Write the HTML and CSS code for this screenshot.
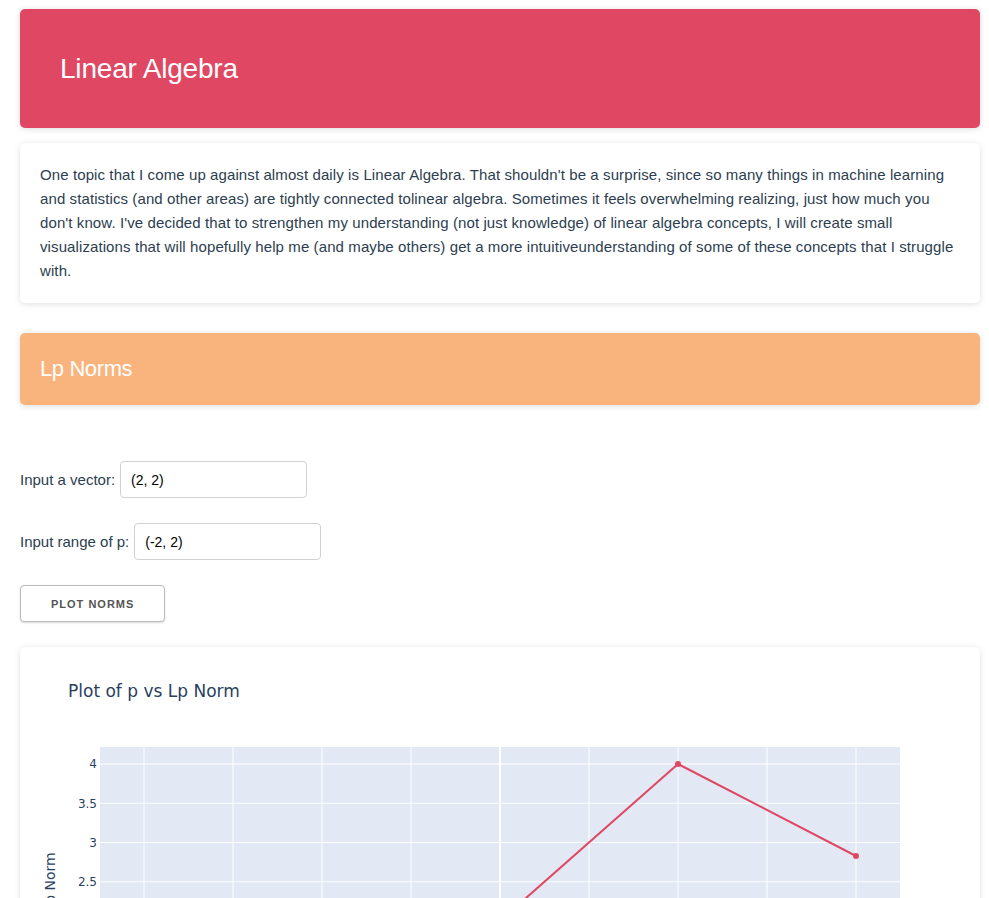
FILE: index.html
```html
<!DOCTYPE html>
<html lang="en">
<head>
<meta charset="utf-8">
<title>Linear Algebra</title>
<link rel="stylesheet" href="styles.css">
</head>
<body>
<main class="page">
  <header class="banner">
    <h1 class="banner-title">Linear Algebra</h1>
  </header>

  <section class="card intro">
    <p>One topic that I come up against almost daily is Linear Algebra. That shouldn't be a surprise, since so many things in machine learning and statistics (and other areas) are tightly connected tolinear algebra. Sometimes it feels overwhelming realizing, just how much you don't know. I've decided that to strengthen my understanding (not just knowledge) of linear algebra concepts, I will create small visualizations that will hopefully help me (and maybe others) get a more intuitiveunderstanding of some of these concepts that I struggle with.</p>
  </section>

  <section class="section-head">
    <h2 class="section-title">Lp Norms</h2>
  </section>

  <form class="controls">
    <div class="field"><label for="vec">Input a vector:</label> <input id="vec" class="text-input" type="text" value="(2, 2)"></div>
    <div class="field"><label for="rng">Input range of p:</label> <input id="rng" class="text-input" type="text" value="(-2, 2)"></div>
    <div class="field"><button type="button" class="btn">Plot Norms</button></div>
  </form>

  <section class="card plot-card">
    <svg class="plot" width="960" height="450" viewBox="0 0 960 450" xmlns="http://www.w3.org/2000/svg">
      <text class="plot-title" x="48" y="50">Plot of p vs Lp Norm</text>
      <rect x="80" y="100" width="800" height="270" fill="#e2e9f4"/>
      <g stroke="#ffffff" stroke-width="1">
        <line x1="124" y1="100" x2="124" y2="370"/>
        <line x1="213" y1="100" x2="213" y2="370"/>
        <line x1="302" y1="100" x2="302" y2="370"/>
        <line x1="391" y1="100" x2="391" y2="370"/>
        <line x1="569" y1="100" x2="569" y2="370"/>
        <line x1="658" y1="100" x2="658" y2="370"/>
        <line x1="747" y1="100" x2="747" y2="370"/>
        <line x1="836" y1="100" x2="836" y2="370"/>
        <line x1="80" y1="117" x2="880" y2="117"/>
        <line x1="80" y1="156.3" x2="880" y2="156.3"/>
        <line x1="80" y1="195.5" x2="880" y2="195.5"/>
        <line x1="80" y1="234.8" x2="880" y2="234.8"/>
        <line x1="80" y1="274" x2="880" y2="274"/>
        <line x1="80" y1="313.3" x2="880" y2="313.3"/>
        <line x1="80" y1="352.5" x2="880" y2="352.5"/>
      </g>
      <line x1="480" y1="100" x2="480" y2="370" stroke="#ffffff" stroke-width="2"/>
      <g class="tick" text-anchor="end">
        <text x="77" y="121">4</text>
        <text x="77" y="160.5">3.5</text>
        <text x="77" y="199.5">3</text>
        <text x="77" y="239">2.5</text>
        <text x="77" y="278">2</text>
        <text x="77" y="317.5">1.5</text>
        <text x="77" y="356.5">1</text>
      </g>
      <g class="tick" text-anchor="middle">
        <text x="124" y="388">−2</text>
        <text x="213" y="388">−1.5</text>
        <text x="302" y="388">−1</text>
        <text x="391" y="388">−0.5</text>
        <text x="480" y="388">0</text>
        <text x="569" y="388">0.5</text>
        <text x="658" y="388">1</text>
        <text x="747" y="388">1.5</text>
        <text x="836" y="388">2</text>
      </g>
      <text class="axis-title" x="480" y="418" text-anchor="middle">p</text>
      <text class="axis-title" x="35" y="235" text-anchor="middle" transform="rotate(-90 35 235)">Lp Norm</text>
      <polyline points="124,320 302,352.5 480,274 658,117 836,209" fill="none" stroke="#df4763" stroke-width="2" stroke-linejoin="round"/>
      <g fill="#df4763">
        <circle cx="124" cy="320" r="3"/>
        <circle cx="302" cy="352.5" r="3"/>
        <circle cx="480" cy="274" r="3"/>
        <circle cx="658" cy="117" r="3"/>
        <circle cx="836" cy="209" r="3"/>
      </g>
    </svg>
  </section>
</main>
</body>
</html>
```

FILE: styles.css
```css
* { box-sizing: border-box; }

html, body {
  margin: 0;
  padding: 0;
  background: #ffffff;
}

body {
  font-family: "Liberation Sans", Arial, Helvetica, sans-serif;
  font-size: 15px;
  line-height: 24px;
  color: #2c3e50;
}

.page {
  width: 960px;
  margin-left: 20px;
  padding-top: 9px;
  padding-bottom: 40px;
}

.banner {
  height: 119px;
  padding: 0 40px;
  display: flex;
  align-items: center;
  background: #df4763;
  border-radius: 5px;
  box-shadow: 0 1px 6px rgba(0, 0, 0, 0.14);
}

.banner-title {
  margin: 0;
  font-size: 28px;
  line-height: 38px;
  font-weight: normal;
  letter-spacing: -0.2px;
  color: #ffffff;
}

.card {
  background: #ffffff;
  border-radius: 5px;
  box-shadow: 0 1px 6px rgba(0, 0, 0, 0.13);
}

.intro {
  margin-top: 15px;
  padding: 20px;
}

.intro p {
  margin: 0;
  letter-spacing: 0.1px;
}

.section-head {
  margin-top: 30px;
  height: 72px;
  padding: 0 20px;
  display: flex;
  align-items: center;
  background: #f9b37c;
  border-radius: 5px;
  box-shadow: 0 1px 6px rgba(0, 0, 0, 0.14);
}

.section-title {
  margin: 0;
  font-size: 22px;
  line-height: 30px;
  font-weight: normal;
  letter-spacing: -0.4px;
  color: #ffffff;
}

.controls {
  margin: 0;
  padding-top: 56px;
  display: flex;
  flex-direction: column;
  gap: 25px;
}

.field {
  display: flex;
  align-items: center;
  height: 37px;
}

.field label {
  margin-right: 5px;
}

.text-input {
  width: 187px;
  height: 37px;
  padding: 0 10px;
  border: 1px solid #d1d1d1;
  border-radius: 4px;
  background: #ffffff;
  font-family: "Liberation Sans", Arial, sans-serif;
  font-size: 14px;
  color: #000000;
  outline: none;
}

.btn {
  height: 37px;
  padding: 0 30px;
  border: 1px solid #bbbbbb;
  border-radius: 4px;
  background: #ffffff;
  box-shadow: 0 1px 2px rgba(0, 0, 0, 0.15);
  font-family: "Liberation Sans", Arial, sans-serif;
  font-size: 11px;
  font-weight: bold;
  letter-spacing: 1px;
  text-transform: uppercase;
  color: #555555;
}

.plot-card {
  margin-top: 25px;
  height: 450px;
  overflow: hidden;
}

.plot {
  display: block;
  font-family: "DejaVu Sans", Verdana, sans-serif;
}

.plot-title {
  font-size: 17px;
  fill: #2a3f5f;
}

.tick text {
  font-size: 12px;
  fill: #2a3f5f;
}

.axis-title {
  font-size: 14px;
  fill: #2a3f5f;
}
```
